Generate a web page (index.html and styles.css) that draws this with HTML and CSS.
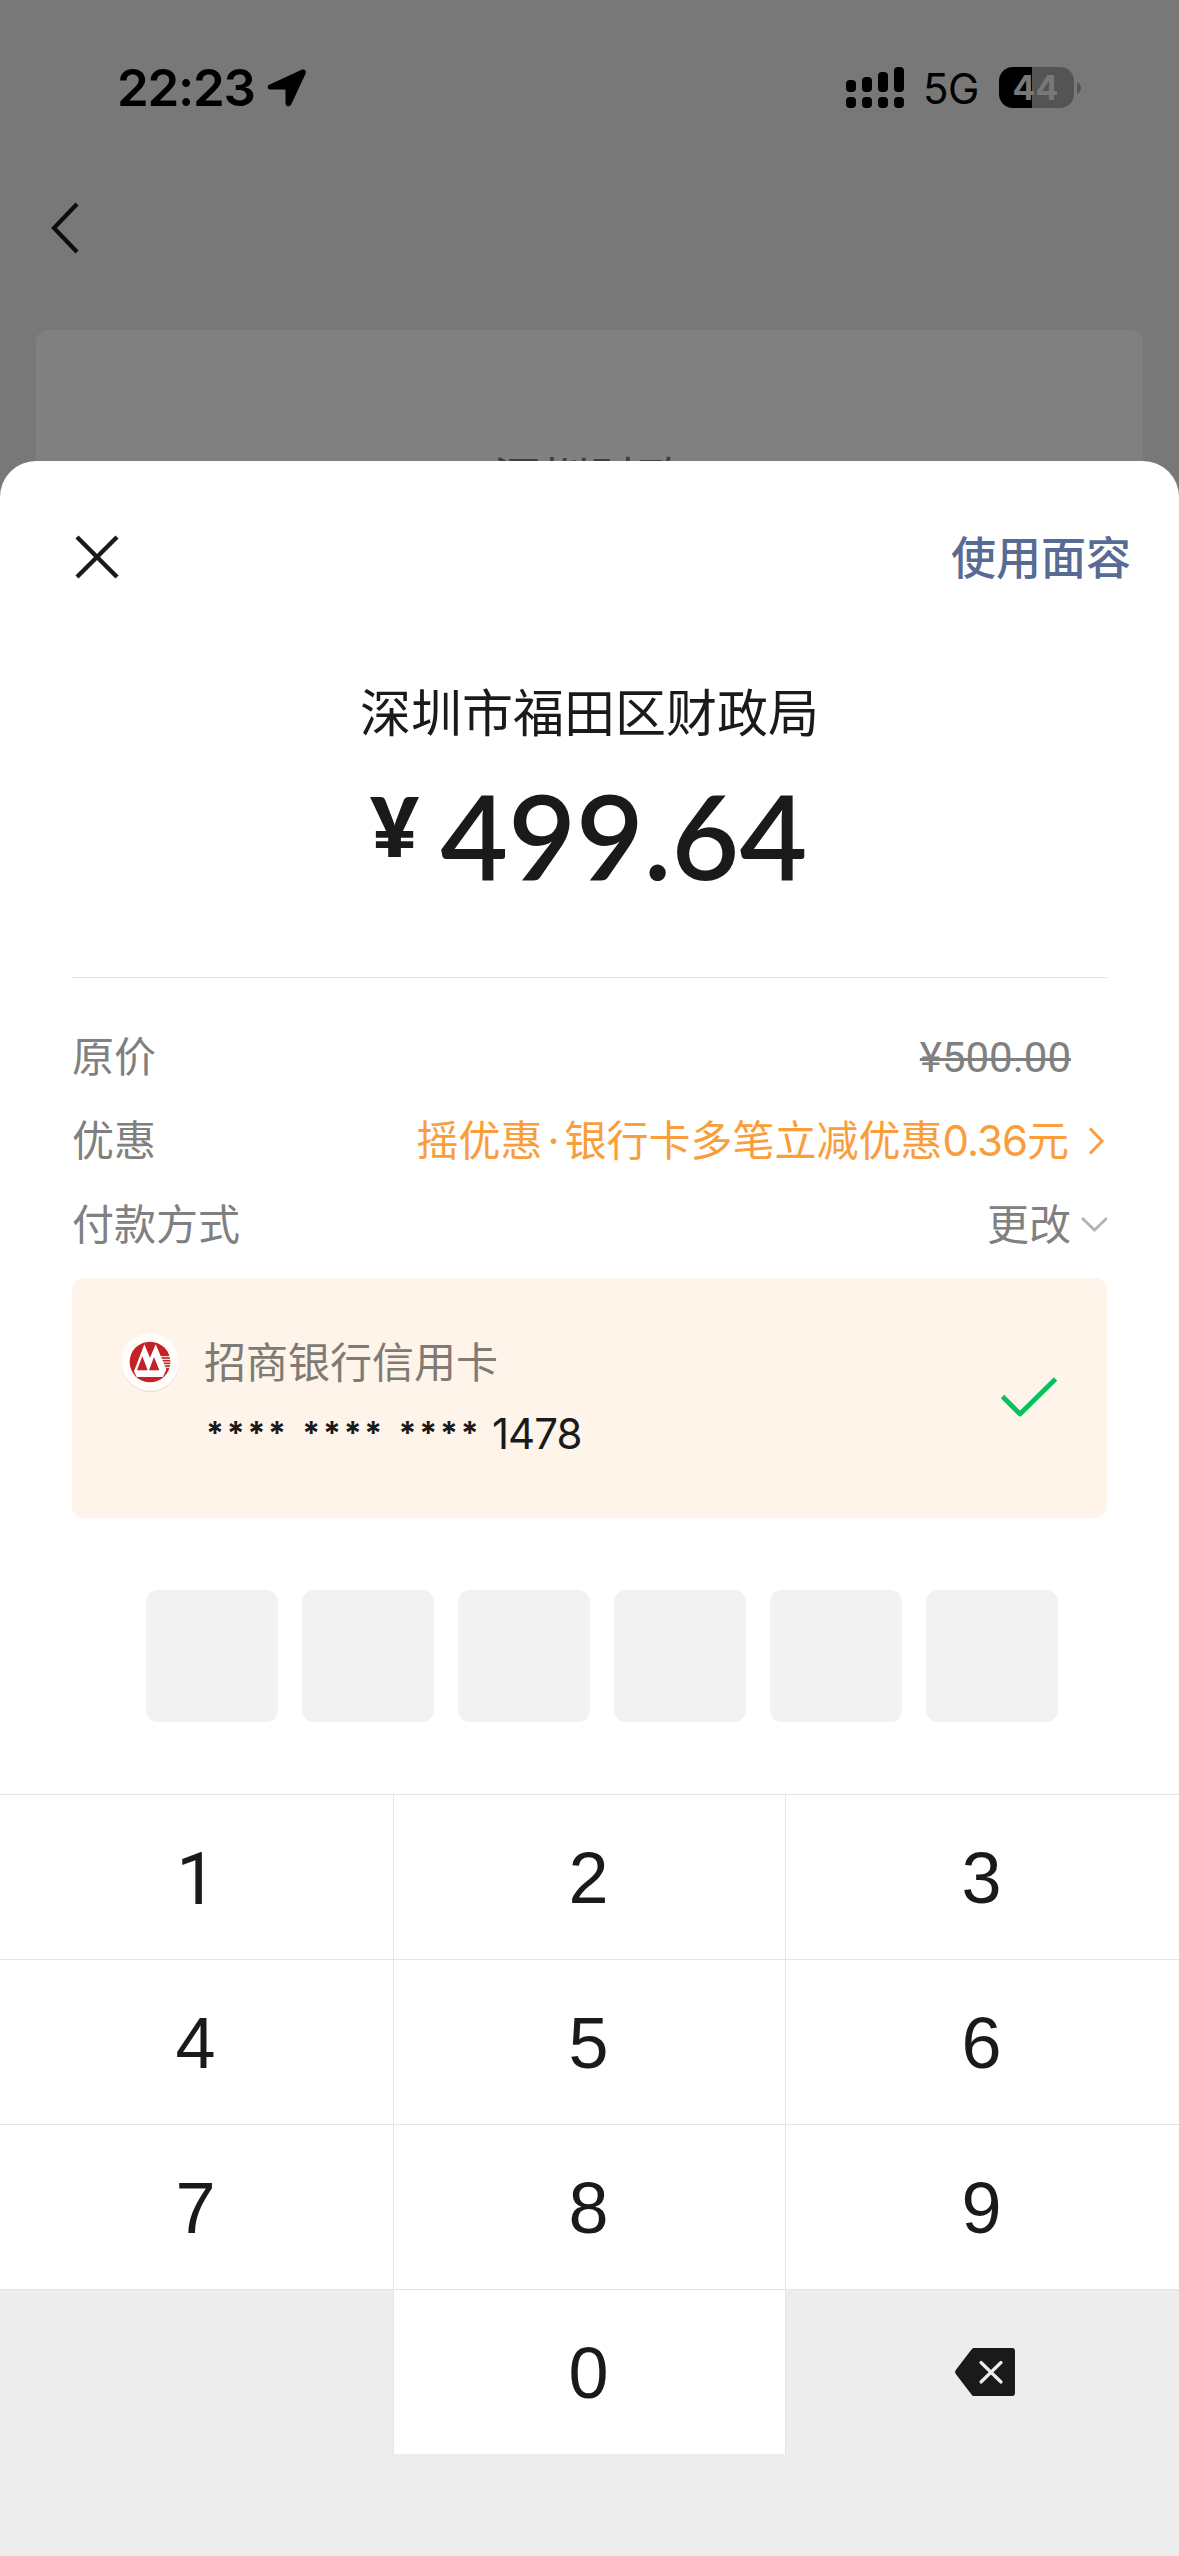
FILE: index.html
```html
<!DOCTYPE html>
<html lang="zh-CN">
<head>
<meta charset="utf-8">
<title>支付</title>
<link rel="stylesheet" href="styles.css">
</head>
<body>
<div class="page">
  <div class="backdrop">
    <div class="status">
      <div class="status-left">
        <span class="time">22:23</span>
        <svg class="locate" width="40" height="40" viewBox="0 0 40 40"><path d="M3 18.5 35.5 3.500Q37.500 3 36.500 5.500L22.500 35.500Q20.500 37.500 20.500 35V19.500H4Q2 19.500 3 18.500Z" fill="#000" stroke="#000" stroke-width="4" stroke-linejoin="round"/></svg>
      </div>
      <div class="status-right">
        <svg class="signal" width="58" height="42" viewBox="0 0 58 42">
          <rect x="0" y="13" width="10" height="12" rx="4"/><rect x="16" y="10" width="10" height="15" rx="4"/><rect x="32" y="5" width="10" height="20" rx="4"/><rect x="48" y="0" width="10" height="25" rx="4"/>
          <rect x="0" y="30" width="10" height="11" rx="4"/><rect x="16" y="30" width="10" height="11" rx="4"/><rect x="32" y="30" width="10" height="11" rx="4"/><rect x="48" y="30" width="10" height="11" rx="4"/>
        </svg>
        <span class="network">5G</span>
        <div class="battery">44</div>
        <svg width="4" height="12" viewBox="0 0 4 12"><path d="M0 0Q4 2 4 6T0 12Z" fill="#545454"/></svg>
      </div>
    </div>
    <div class="navbar">
      <svg width="30" height="54" viewBox="0 0 30 54"><path d="M27 3 4 27 27 51" fill="none" stroke="#0d0d0d" stroke-width="4.200"/></svg>
    </div>
    <div class="under-card">深圳财政</div>
  </div>

  <div class="sheet">
    <div class="sheet-head">
      <svg class="close" width="44" height="44" viewBox="0 0 44 44"><path d="M2 2 42 42M42 2 2 42" stroke="#1a1a1a" stroke-width="4.400"/></svg>
      <a class="face">使用面容</a>
    </div>
    <div class="payee">深圳市福田区财政局</div>
    <div class="amount"><span class="yen">¥</span><span class="sum">499.64</span></div>
    <div class="details">
      <div class="row"><span class="label">原价</span><span class="value origin">¥500.00</span></div>
      <div class="row">
        <span class="label">优惠</span>
        <span class="value promo">摇优惠<i class="dot">·</i>银行卡多笔立减优惠<span class="off">0.36</span>元</span>
        <svg class="arrow" width="38" height="30" viewBox="0 0 38 30"><path d="M21 2.500 33 15 21 27.500" fill="none" stroke="#fa9d3b" stroke-width="3"/></svg>
      </div>
      <div class="row">
        <span class="label">付款方式</span>
        <span class="value change">更改</span>
        <svg class="arrow" width="36" height="30" viewBox="1 0 36 30"><path d="M12 8 24.500 20 37 8" fill="none" stroke="#b2b2b2" stroke-width="2.800"/></svg>
      </div>
    </div>
    <div class="bank">
      <svg class="logo" width="60" height="60" viewBox="0 0 180 180">
        <circle cx="90" cy="93" r="87" fill="#e6dcd4"/>
        <circle cx="90" cy="90" r="87" fill="#fffcfa"/>
        <circle cx="90" cy="90" r="61" fill="#c22226"/>
        <path d="M42 118 73 37 90 77 107 37 139 112 129 135H50Z" fill="#fff"/>
        <path d="M51 115 67 73 83 115ZM87 115 102 75 118 115Z" fill="#c22226"/>
        <path d="M122 74H151M125 82H151M129 90H151M132 98H151M136 106H149" stroke="#fff" stroke-width="3"/>
      </svg>
      <div class="bank-text">
        <div class="bank-name">招商银行信用卡</div>
        <div class="bank-no"><span class="stars">****</span><span class="stars">****</span><span class="stars">****</span><span class="tail">1478</span></div>
      </div>
      <svg class="check" width="58" height="42" viewBox="0 0 58 42"><path d="M2.500 20.500 20 38 55.500 3" fill="none" stroke="#07c160" stroke-width="4.800" stroke-linejoin="round"/></svg>
    </div>
    <div class="pin"><b></b><b></b><b></b><b></b><b></b><b></b></div>
    <div class="keypad">
      <div class="key one">1</div><div class="key">2</div><div class="key">3</div>
      <div class="key">4</div><div class="key">5</div><div class="key">6</div>
      <div class="key">7</div><div class="key">8</div><div class="key">9</div>
      <div class="key blank"></div><div class="key">0</div>
      <div class="key blank">
        <svg class="erase" width="60" height="48" viewBox="0 0 60 48"><path d="M18.500 0H57Q60 0 60 3V45Q60 48 57 48H18.500Q17.500 48 16.500 46.500L.800 26Q-.500 24 .800 22L16.500 1.500Q17.500 0 18.500 0Z" fill="#1a1a1a"/><path d="M26 14.500 46 34M46 14.500 26 34" stroke="#ededed" stroke-width="3.200" stroke-linecap="round"/></svg>
      </div>
    </div>
  </div>
</div>
</body>
</html>
```
FILE: styles.css
```css
* { box-sizing: border-box; }
body { margin: 0; }
svg { display: block; flex: none; }
.page {
  width: 1179px;
  height: 2556px;
  overflow: hidden;
  display: flex;
  flex-direction: column;
  background: #787878;
  color: #1a1a1a;
  font-family: Inter, "Noto Sans CJK SC", sans-serif;
}
.backdrop { height: 461px; overflow: hidden; flex: none; }
.status {
  height: 175px;
  padding: 0 98px 0 117px;
  display: flex;
  justify-content: space-between;
  color: #000;
}
.status-left, .status-right { display: flex; align-items: center; height: 175px; }
.time { font-size: 51px; font-weight: 600; letter-spacing: -1.300px; }
.locate { margin-left: 12px; }
.signal { fill: #000; }
.network { font-size: 42px; margin: 2px 20px 0 19px; letter-spacing: -.500px; width: 56px; }
.battery {
  width: 75px;
  height: 41px;
  margin-right: 3px;
  padding-right: 2px;
  border-radius: 14px;
  background: linear-gradient(90deg, #000 33px, #545454 33px);
  color: #787878;
  font-size: 34px;
  font-weight: 700;
  line-height: 41px;
  text-align: center;
}
.navbar { height: 155px; padding: 26px 0 0 50px; }
.under-card {
  height: 200px;
  margin: 0 36px;
  padding-top: 114px;
  border-radius: 12px;
  background: #808080;
  color: #404040;
  font-size: 48px;
  line-height: 72px;
  text-align: center;
}
.sheet {
  flex: 1;
  display: flex;
  flex-direction: column;
  border-radius: 36px 36px 0 0;
  background: #fff;
}
.sheet-head {
  height: 188px;
  padding: 0 48px 0 75px;
  display: flex;
  align-items: center;
  justify-content: space-between;
}
.close { margin-top: 3px; }
.face { color: #576b95; font-size: 45px; font-weight: 500; }
.payee { height: 120px; font-size: 51px; line-height: 130px; text-align: center; }
.amount {
  height: 209px;
  margin: 0 72px;
  border-bottom: 1px solid #e5e5e5;
  display: flex;
  justify-content: center;
  font-family: Lato, sans-serif;
  font-weight: 600;
}
.yen { font-size: 82px; font-weight: 800; line-height: 113px; margin: 0 22px 0 -1px; }
.sum { font-size: 117px; line-height: 133px; }
.details { padding: 37px 72px 11px; }
.row {
  height: 84px;
  display: flex;
  align-items: center;
  color: #808080;
  font-size: 42px;
}
.label, .promo, .change { padding-bottom: 8px; }
.value { margin-left: auto; margin-right: 36px; }
.arrow { margin-left: -36px; }
.origin { font-family: Roboto, sans-serif; text-decoration: line-through; text-decoration-thickness: 3px; }
.promo { color: #fa9d3b; margin-right: 38px; }
.promo + .arrow { margin-left: -38px; }
.off { letter-spacing: -1px; }
.dot { display: inline-block; width: 22px; text-align: center; font-style: normal; }
.bank {
  height: 240px;
  margin: 0 72px;
  padding: 54px 49px 0 48px;
  display: flex;
  border-radius: 12px;
  background: #fff4ea;
}
.bank-text { margin-left: 24px; flex: 1; }
.bank-name { color: #807a75; font-size: 42px; line-height: 62px; }
.bank-no { display: flex; font-size: 42px; line-height: 60px; margin-top: 10px; }
.stars { width: 96.300px; font-size: 32px; font-weight: 700; line-height: 59px; letter-spacing: 2.800px; padding-left: 2px; }
.tail { letter-spacing: -.900px; margin-left: -1px; }
.check { margin-top: 44px; }
.pin { display: flex; gap: 24px; margin: 72px 0 72px 146px; }
.pin b { width: 132px; height: 132px; border-radius: 12px; background: #f2f2f2; }
.keypad {
  display: grid;
  grid-template-columns: 393px 391px 393px;
  grid-auto-rows: 164px;
  gap: 1px;
  padding-top: 1px;
  background: linear-gradient(#e5e5e5 660px, #ededed 660px);
  flex: 1;
}
.key {
  height: 164px;
  display: flex;
  align-items: center;
  justify-content: center;
  padding: 2px 2px 0 0;
  background: #fff;
  font: 72px/168px "Liberation Sans", sans-serif;
}
.one { font-family: Roboto, sans-serif; padding-top: 6px; padding-right: 0; }
.blank { background: #ededed; padding-top: 0; }
.erase { margin-left: 6px; }
```
